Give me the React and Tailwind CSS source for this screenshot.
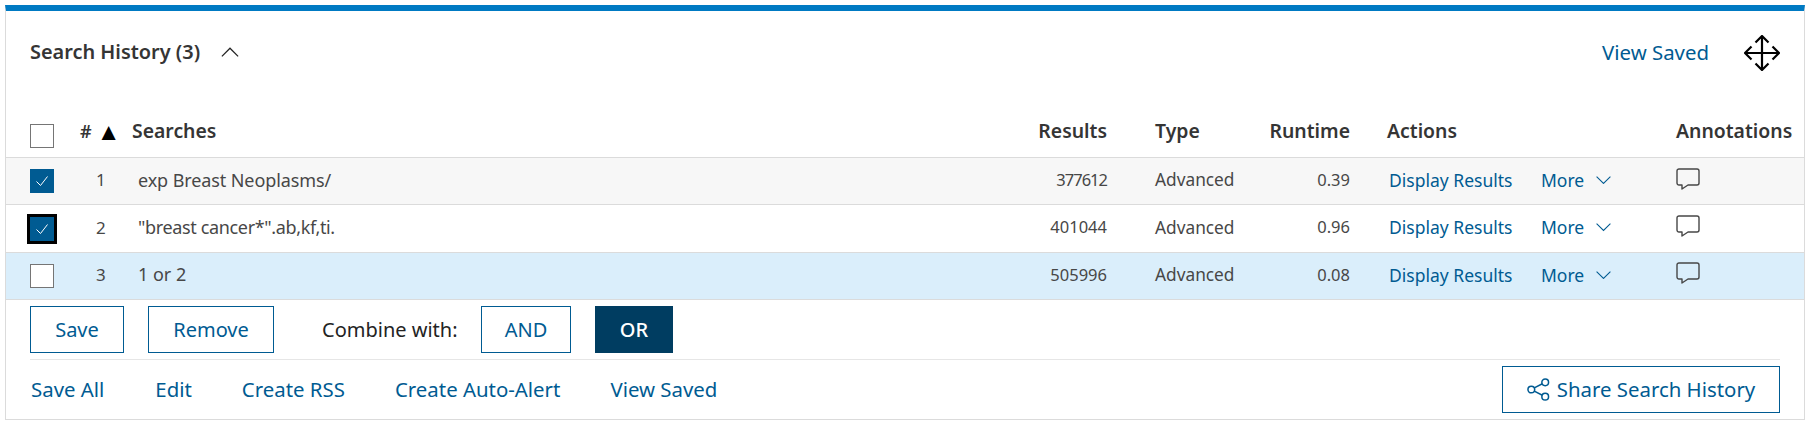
import React from "react";

const rows = [
  { n: 1, query: "exp Breast Neoplasms/", results: "377612", resultsTrack: "tracking-[-1px]", queryTrack: "tracking-[-0.1px]", runtime: "0.39", checked: true, bg: "bg-[#f7f7f7]" },
  { n: 2, query: "\"breast cancer*\".ab,kf,ti.", results: "401044", resultsTrack: "", queryTrack: "tracking-[-0.35px]", runtime: "0.96", checked: true, focus: true, bg: "bg-white" },
  { n: 3, query: "1 or 2", results: "505996", resultsTrack: "", queryTrack: "", runtime: "0.08", checked: false, bg: "bg-[#daeefb]" },
];

const gridCols = "grid grid-cols-[70px_56px_1fr_100px_48px_100px_95px_37px_289px_128px] items-center";

function Check() {
  return (
    <svg width="14" height="14" viewBox="0 0 14 14" fill="none" stroke="#fff" strokeWidth="1">
      <path d="M1.5 7.5 L5.5 11.5 L12.5 2.5" />
    </svg>
  );
}

function Checkbox({ checked, focus }) {
  if (checked) {
    return (
      <span
        className={`flex h-6 w-6 items-center justify-center bg-[#005b92] ${
          focus ? "outline-[3px] outline-black" : ""
        }`}
      >
        <Check />
      </span>
    );
  }
  return <span className="block h-6 w-6 border border-[#757575] bg-white"></span>;
}

function Chevron({ up, size = 15, color = "#005b92" }) {
  return (
    <svg width={size} height={size / 2 + 1} viewBox="0 0 14 8" fill="none" stroke={color} strokeWidth="1">
      <path d={up ? "M0.5 7.5 L7 1 L13.5 7.5" : "M0.5 0.5 L7 7 L13.5 0.5"} />
    </svg>
  );
}

function Comment() {
  return (
    <svg width="24" height="23" viewBox="0 0 24 23" fill="none" stroke="#474747" strokeWidth="1.4" strokeLinejoin="round">
      <path d="M3 1h18a2 2 0 0 1 2 2v12a2 2 0 0 1-2 2H12l-6 4v-4H3a2 2 0 0 1-2-2V3a2 2 0 0 1 2-2z" />
    </svg>
  );
}

function MoveIcon() {
  return (
    <svg className="mt-[2px]" width="36" height="36" viewBox="0 0 36 36" fill="none" stroke="#000" strokeWidth="2.2">
      <path d="M18 1v34M1 18h34M11.5 7.5L18 1l6.5 6.5M11.5 28.5L18 35l6.5-6.5M7.5 11.5L1 18l6.5 6.5M28.5 11.5L35 18l-6.5 6.5" />
    </svg>
  );
}

function ShareIcon() {
  return (
    <svg width="23" height="23" viewBox="0 0 24 24" fill="none" stroke="#005b92" strokeWidth="1.6">
      <circle cx="4.5" cy="12" r="3.5" />
      <circle cx="19" cy="4.5" r="3.5" />
      <circle cx="19" cy="19.5" r="3.5" />
      <path d="M7.6 10.3 L16 6M7.6 13.7 L16 18" />
    </svg>
  );
}

function OutlineButton({ children, className }) {
  return (
    <button className={`flex h-[47px] items-center justify-center border border-[#005b92] bg-white text-[#005b92] ${className}`}>
      {children}
    </button>
  );
}

export default function App() {
  return (
    <div className="min-h-[421px] bg-white p-[5px] pb-0 font-['Noto_Sans',sans-serif] text-[#474747]">
      <div className="h-[415px] border-x border-b border-[#dbdbdb] border-t-[6px] border-t-[#007ac3]">
        <div className="flex h-[91px] items-center justify-between pl-6 pr-6 pb-[9px]">
          <div className="flex items-center gap-[21px]">
            <h2 className="text-[19.9px] font-semibold text-[#353535]">Search History (3)</h2>
            <Chevron up size={18} color="#232323" />
          </div>
          <div className="flex items-center gap-[35px]">
            <a className="text-[20.4px] text-[#005b92]">View Saved</a>
            <MoveIcon />
          </div>
        </div>

        <div className={`${gridCols} h-[56px] border-b border-[#dbdbdb] pt-[3px] text-[19.4px] font-semibold text-[#353535]`}>
          <div className="pl-6 pt-[10px]"><Checkbox /></div>
          <div className="flex items-center gap-[5px] pl-[4px] text-[18px]">
            <span>#</span>
            <span className="text-[24px] leading-none text-black">▲</span>
          </div>
          <div>Searches</div>
          <div className="text-right">Results</div>
          <div></div>
          <div>Type</div>
          <div className="text-right">Runtime</div>
          <div></div>
          <div>Actions</div>
          <div className="whitespace-nowrap">Annotations</div>
        </div>

        {rows.map((row) => (
          <div key={row.n} className={`${gridCols} h-[47.4px] border-b border-[#dbdbdb] pb-[2px] text-[16.5px] ${row.bg}`}>
            <div className="pl-6 pt-[2px]"><Checkbox checked={row.checked} focus={row.focus} /></div>
            <div className="pl-[20px] text-[17px]">{row.n}</div>
            <div className={`pl-[6px] text-[18px] ${row.queryTrack}`}>{row.query}</div>
            <div className={`text-right ${row.resultsTrack}`}>{row.results}</div>
            <div></div>
            <div className="text-[17.3px]">Advanced</div>
            <div className="text-right">{row.runtime}</div>
            <div></div>
            <div className="flex items-center pl-[2px] text-[17.5px] text-[#005b92]">
              <a className="w-[152px]">Display Results</a>
              <a>More</a>
              <span className="ml-[12px]"><Chevron /></span>
            </div>
            <div className="-mt-[2px]"><Comment /></div>
          </div>
        ))}

        <div className="mx-6 flex h-[60px] items-start border-b border-[#e6e6e6] pt-[6px] text-[20px]">
          <OutlineButton className="w-[94px]">Save</OutlineButton>
          <OutlineButton className="ml-6 w-[126px]">Remove</OutlineButton>
          <span className="ml-[48px] flex h-[47px] w-[136px] items-center whitespace-nowrap text-[#232323]">Combine with:</span>
          <OutlineButton className="ml-[23px] w-[90px]">AND</OutlineButton>
          <button className="ml-6 flex h-[47px] w-[78px] items-center justify-center bg-[#003d61] font-medium text-white">OR</button>
        </div>

        <div className="mx-6 flex h-[59px] items-center justify-between text-[20.4px] text-[#005b92]">
          <div className="flex items-center gap-[50px] pl-px">
            <a className="mr-px">Save All</a>
            <a>Edit</a>
            <a>Create RSS</a>
            <a>Create Auto-Alert</a>
            <a>View Saved</a>
          </div>
          <OutlineButton className="w-[278px] gap-[7px]">
            <ShareIcon />
            Share Search History
          </OutlineButton>
        </div>
      </div>
    </div>
  );
}
